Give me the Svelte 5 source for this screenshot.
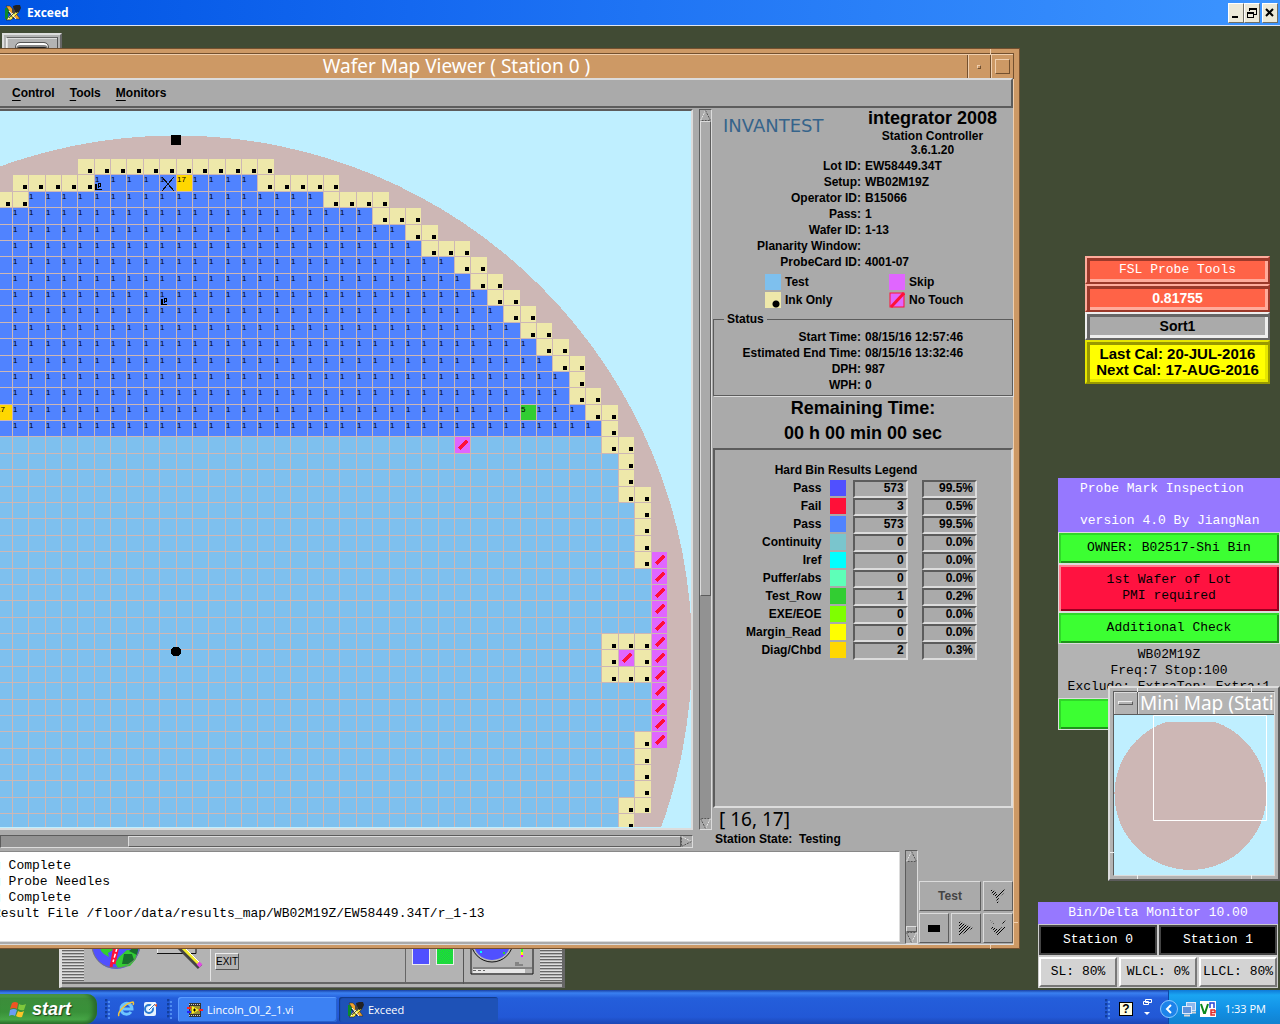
<script>
  const PITCH = 16.38;
  const colX = (c) => Math.ceil(12.3 + PITCH * c) - 1;
  const rowY = (r) => Math.round(158 + PITCH * r) - 111;

  // Ink-only dies per row, as [row, first column, last column]
  const ink = [
    [0, 4, 15], [1, 0, 4], [1, 15, 19], [2, -1, 0], [2, 19, 22], [3, 22, 24], [4, 24, 25],
    [5, 25, 27], [6, 27, 28], [7, 28, 29], [8, 29, 30], [9, 30, 31], [10, 31, 32],
    [11, 32, 33], [12, 33, 34], [13, 34, 34], [14, 34, 35], [15, 35, 36], [16, 36, 36],
    [17, 36, 37], [18, 37, 37], [19, 37, 37], [20, 37, 38], [21, 38, 38], [22, 38, 38],
    [23, 38, 38], [24, 38, 38], [29, 36, 38], [30, 36, 36], [30, 38, 38], [31, 36, 38],
    [35, 38, 38], [36, 38, 38], [37, 38, 38], [38, 38, 38], [39, 37, 38], [40, 37, 37]
  ];
  // Last tested (or testable) column of each row
  const lastCol = [
    null, 14, 18, 21, 23, 24, 26, 27, 28, 29, 30, 31, 32, 33, 33, 34, 35, 35, 36, 36, 36,
    37, 37, 37, 37, 38, 38, 38, 38, 35, 35, 35, 38, 38, 38, 37, 37, 37, 37, 36, 36
  ];
  const firstCol = (r) => (r === 1 ? 5 : r === 2 ? 1 : -1);

  const box = (c, r) => ({
    x: colX(c) + 1,
    y: rowY(r) + 1,
    w: colX(c + 1) - colX(c) - 1,
    h: rowY(r + 1) - rowY(r) - 1
  });

  const cells = [];
  for (const [r, a, b] of ink) {
    for (let c = a; c <= b; c++) cells.push({ ...box(c, r), kind: 'ink' });
  }
  for (let r = 1; r <= 40; r++) {
    for (let c = firstCol(r); c <= lastCol[r]; c++) {
      let kind = r <= 16 ? 'pass' : 'test';
      let bin = r <= 16 && c >= 0 ? '1' : '';
      if (r === 1 && c === 10) [kind, bin] = ['diag', '17'];
      if (r === 15 && c === -1) [kind, bin] = ['diag', '17'];
      if (r === 15 && c === 31) [kind, bin] = ['row', '5'];
      if (r === 17 && c === 27) kind = 'skip';
      cells.push({ ...box(c, r), kind, bin });
    }
  }
  for (let r = 24; r <= 35; r++) cells.push({ ...box(39, r), kind: 'skip' });
  cells.push({ ...box(37, 30), kind: 'skip' });

  const info = [
    ['Lot ID:', 'EW58449.34T'], ['Setup:', 'WB02M19Z'], ['Operator ID:', 'B15066'],
    ['Pass:', '1'], ['Wafer ID:', '1-13'], ['Planarity Window:', ''], ['ProbeCard ID:', '4001-07']
  ];
  const times = [
    ['Start Time:', '08/15/16 12:57:46'], ['Estimated End Time:', '08/15/16 13:32:46'],
    ['DPH:', '987'], ['WPH:', '0']
  ];
  const bins = [
    ['Pass', 'b-pass', '573', '99.5%'], ['Fail', 'b-fail', '3', '0.5%'],
    ['Pass', 'b-blue', '573', '99.5%'], ['Continuity', 'b-cont', '0', '0.0%'],
    ['Iref', 'b-iref', '0', '0.0%'], ['Puffer/abs', 'b-puff', '0', '0.0%'],
    ['Test_Row', 'b-row', '1', '0.2%'], ['EXE/EOE', 'b-exe', '0', '0.0%'],
    ['Margin_Read', 'b-marg', '0', '0.0%'], ['Diag/Chbd', 'b-diag', '2', '0.3%']
  ];
  const log = 'g Complete\ng Probe Needles\ng Complete\nResult File /floor/data/results_map/WB02M19Z/EW58449.34T/r_1-13';
</script>

{#snippet arrow(dir)}
  <svg class="arrow {dir}" width="11" height="11" viewBox="0 0 11 11" aria-hidden="true">
    <path d="M5.5 .5L.5 10.5" stroke="#e8e8e8" stroke-dasharray="2 1" />
    <path d="M5.5 .5L10.5 10.5H.5" stroke="#555" stroke-dasharray="2 1" fill="none" />
  </svg>
{/snippet}

{#snippet exceedIcon()}
  <svg width="16" height="16" viewBox="0 0 16 16" aria-hidden="true">
    <path d="M0 3h2l3 4-2 2v5H0z" fill="#0c8a2c" />
    <path d="M1 1h4l5 6 5 7h-4L6 9z" fill="#f2a32b" stroke="#222" stroke-width=".5" />
    <path d="M14 7L6 15H1l7-8 3-3z" fill="#f5ec48" stroke="#222" stroke-width=".6" />
    <path d="M4 6l7 8M10 6l-7 8" stroke="#fff" />
    <path d="M3 7l6 7M10 7l-6 6" stroke="#111" stroke-width=".7" />
    <path d="M8 1l3-1h4l1 3-2 4-3 1-2-2z" fill="#222" />
    <path d="M7 3l3 2v4L7 7z" fill="#444" />
  </svg>
{/snippet}

<div class="screen">
  <header class="xp-title">
    {@render exceedIcon()}
    <h1>Exceed</h1>
    <div class="xp-ctl">
      <button aria-label="Minimize"><svg width="12" height="12" viewBox="0 0 12 12"><path d="M2 10h6" stroke="#000" stroke-width="2" /></svg></button>
      <button aria-label="Restore"><svg width="12" height="12" viewBox="0 0 12 12" shape-rendering="crispEdges"><path d="M4 1h7v2H4zM3 1h1v3H3zM10 3h1v5H8V7h2zM1 5h7v2H1zM1 7h1v4H1zM7 7h1v4H7zM1 10h7v1H1z" /></svg></button>
      <button aria-label="Close" class="gap"><svg width="12" height="12" viewBox="0 0 12 12"><path d="M2 2l7 7M9 2l-7 7" stroke="#000" stroke-width="2" /></svg></button>
    </div>
  </header>

  <main class="desktop">
    <div class="cde-icon"><div><span></span></div></div>

    <div class="dock">
      <div class="grip"></div>
      <svg class="dock-art" width="150" height="38" viewBox="84 949 150 38" aria-hidden="true">
        <circle cx="116" cy="948" r="24" fill="#5050ff" />
        <path d="M100 949h9l4 4-5 3 1 4-5-3-3-3zM119 960l8-7 10 1-1 8-6 7-12 2-3-5z" fill="#32cd32" />
        <path d="M124 957h8l2 6-6 4h-6zM135 949h4l-2 9-8-4z" fill="#17702c" />
        <path d="M115 949l-4 21M118 949l-4 18" stroke="#ff1038" stroke-width="3" />
        <path d="M117 951l-4 14" stroke="#fff" stroke-width="1.5" stroke-dasharray="4 2" />
        <path d="M92 951c2 11 10 20 24 20 12 0 21-8 24-20" fill="none" stroke="#777" />
        <path d="M157.500 948v8h38v-8z" fill="#bbb" />
        <path d="M157.500 948v8" stroke="#eee" /><path d="M157 956.500h39V948" stroke="#111" fill="none" />
        <path d="M178 948l22 22" stroke="#444" stroke-width="6" />
        <path d="M179 947l20 20" stroke="#f5ee30" stroke-width="3" />
        <path d="M181 947l18 18" stroke="#fff" />
        <path d="M198 966l3 3" stroke="#e04de0" stroke-width="4" />
        <path d="M210.500 949v35" stroke="#e4e4e4" />
      </svg>
      <button class="exit">EXIT</button>
      <div class="dock-space"></div>
      <div class="swatches"><span></span><span class="g"></span></div>
      <svg class="dock-map" width="76" height="38" viewBox="463 949 76 38" aria-hidden="true">
        <path d="M462.500 949v35" stroke="#eee" />
        <path d="M469 948h63v28h-63z" fill="#b3b3b3" /><path d="M470 949v28h62v-28" stroke="#111" fill="none" />
        <circle cx="491" cy="944" r="21" fill="#b8b8b8" stroke="#111" />
        <circle cx="491" cy="944" r="19" fill="#5050ff" />
        <path d="M479 954h2v2h-2z" fill="#0ff" /><path d="M502 955h2v2h-2z" fill="#32cd32" />
        <path d="M521 949v3" stroke="#0ff" stroke-width="2" /><path d="M521 952v3" stroke="#3f3" stroke-width="2" /><path d="M521 955v3" stroke="#ff0" stroke-width="2" /><path d="M521 958v2" stroke="#f0f" stroke-width="2" />
        <path d="M514 966h4m-4 2h8M472 971h59" stroke="#555" />
        <path d="M472 972h52v4h-52z" fill="#e8e8e8" /><path d="M472 973.500h12" stroke="#666" stroke-dasharray="3 2" />
      </svg>
      <div class="grip"></div>
    </div>

    <section class="viewer">
      <div class="v-title">
        <h2>Wafer Map Viewer ( Station 0 )</h2>
        <button class="v-btn" aria-label="Minimize"><span class="dot"></span></button>
        <button class="v-btn" aria-label="Maximize"><span class="max"></span></button>
      </div>
      <nav class="menu">
        <button><u>C</u>ontrol</button>
        <button><u>T</u>ools</button>
        <button><u>M</u>onitors</button>
      </nav>
      <div class="work">
        <div class="map-col">
          <div class="map-row">
            <div class="map">
              <svg width="693" height="716" shape-rendering="crispEdges" role="img" aria-label="Wafer map">
                <circle cx="176" cy="540.500" r="516" fill="#cdb7b5" />
                {#each cells as cell}
                  <rect x={cell.x} y={cell.y} width={cell.w} height={cell.h} class={cell.kind} />
                  {#if cell.kind === 'ink'}
                    <rect x={cell.x + 10} y={cell.y + 10} width="4" height="4" />
                  {:else if cell.kind === 'skip'}
                    <path d="M{cell.x + 4} {cell.y + 12}l8 -8" stroke="#ff1038" stroke-width="3" />
                  {/if}
                  {#if cell.bin}
                    <text x={cell.x} y={cell.y + 7} class="bin">{cell.bin}</text>
                  {/if}
                {/each}
                <path d="M162 66l12 14M174 66l-12 14" stroke="#111" />
                <g fill="none" stroke="#000">
                  <path d="M96 73v6" stroke-width="2" /><path d="M95 78.500h7M98.500 77v-5M98 72.500h3M100.500 72v3M98 75.500h3" />
                  <path d="M162 188v6" stroke-width="2" /><path d="M161 193.500h6M164.500 192v-5M164 187.500h3M166.500 187v3M164 190.500h3" />
                </g>
                <rect x="171" y="24" width="10" height="10" />
                <circle cx="176" cy="540.500" r="5" />
              </svg>
            </div>
            <div class="sb v">
              <button aria-label="Scroll map up">{@render arrow('up')}</button>
              <div class="thumb"></div>
              <div class="trough"></div>
              <button aria-label="Scroll map down">{@render arrow('down')}</button>
            </div>
          </div>
          <div class="sb h">
            <div class="trough"></div>
            <div class="thumb"></div>
            <button aria-label="Scroll map right">{@render arrow('right')}</button>
          </div>
        </div>

        <aside class="panel">
          <div class="brand">
            <div class="logo">INVANTEST</div>
            <div class="prod"><h3>integrator 2008</h3><p>Station Controller</p><p>3.6.1.20</p></div>
          </div>
          <dl class="info">
            {#each info as [k, v]}<dt>{k}</dt><dd>{v}</dd>{/each}
          </dl>
          <div class="legend">
            <i class="l-test"></i><span>Test</span><i class="l-skip"></i><span>Skip</span>
            <i class="l-ink"></i><span>Ink Only</span>
            <svg width="16" height="16" viewBox="0 0 16 16"><rect x="1" y="1" width="14" height="14" fill="#e066ff" stroke="#ff1038" /><path d="M2 15L15 1" stroke="#ff1038" stroke-width="3" /></svg><span>No Touch</span>
          </div>
          <fieldset class="status">
            <legend>Status</legend>
            <dl class="info">
              {#each times as [k, v]}<dt>{k}</dt><dd>{v}</dd>{/each}
            </dl>
          </fieldset>
          <div class="remain"><p>Remaining Time:</p><p>00 h 00 min 00 sec</p></div>
          <div class="results">
            <table>
              <caption>Hard Bin Results Legend</caption>
              <tbody>
                {#each bins as [name, cls, count, pct]}
                  <tr>
                    <th scope="row">{name}</th>
                    <td class="sw"><i class={cls}></i></td>
                    <td class="num"><span>{count}</span></td>
                    <td class="num pct"><span>{pct}</span></td>
                  </tr>
                {/each}
              </tbody>
            </table>
          </div>
          <p class="coord">[ 16, 17]</p>
          <p class="state">Station State:&nbsp; Testing</p>
        </aside>
      </div>

      <div class="bottom">
        <div class="log"><textarea readonly aria-label="Station log" value={log}></textarea></div>
        <div class="sb v">
          <button aria-label="Scroll log up">{@render arrow('up')}</button>
          <div class="trough"></div>
          <div class="thumb small"></div>
          <button aria-label="Scroll log down">{@render arrow('down')}</button>
        </div>
        <div class="pad">
          <button class="wide" disabled>Test</button>
          <button aria-label="Step down" disabled><svg width="18" height="18" viewBox="0 0 18 18"><path d="M1 2l5 2 2 3h2l2-3 5-2-3 5-4 3-1 6H8l-1-6-4-3z" fill="url(#hatch)" /></svg></button>
          <button aria-label="Stop"><svg width="18" height="18" viewBox="0 0 18 18"><path d="M3 6h12v7H3z" /></svg></button>
          <button aria-label="Play" disabled><svg width="18" height="18" viewBox="0 0 18 18"><path d="M2 2l14 7-14 8z" fill="url(#hatch)" /></svg></button>
          <button aria-label="Skip down" disabled><svg width="18" height="18" viewBox="0 0 18 18"><path d="M1 1l4 3-1 1zM17 1l-4 3 1 1zM1 8h4l2 2h4l2-2h4l-8 9z" fill="url(#hatch)" /></svg></button>
          <svg width="0" height="0" class="defs" aria-hidden="true"><defs><pattern id="hatch" width="3" height="3" patternUnits="userSpaceOnUse"><path d="M0 3l3-3M-1 1l2-2M2 4l2-2" stroke="#000" /></pattern></defs></svg>
        </div>
      </div>
      <i class="tick top"></i><i class="tick side"></i><i class="tick foot"></i>
    </section>

    <section class="fsl">
      <button class="red mono">FSL Probe Tools</button>
      <button class="red">0.81755</button>
      <button class="gray">Sort1</button>
      <button class="yellow">Last Cal: 20-JUL-2016<br />Next Cal: 17-AUG-2016</button>
    </section>

    <section class="pmi mono">
      <h3>Probe Mark Inspection<br />version 4.0 By JiangNan</h3>
      <button>OWNER: B02517-Shi Bin</button>
      <button class="alert">1st Wafer of Lot<br />PMI required</button>
      <button>Additional Check</button>
      <p>WB02M19Z<br />Freq:7 Stop:100<br />Exclude: ExtraTop: Extra:1</p>
      <button aria-label="Confirm"></button>
    </section>

    <section class="mini">
      <div class="m-in">
        <div class="m-title"><button aria-label="Window menu"><span></span></button><h3>Mini Map (Stati</h3></div>
        <svg width="160" height="160" viewBox="0 0 160 160" aria-hidden="true">
          <path d="M52 7h49a76 76 0 1 1-49 0z" fill="#cdb7b5" shape-rendering="crispEdges" />
          <path d="M39.500 .5h113v105h-113z" fill="none" stroke="#fff" />
        </svg>
      </div>
      <i class="mt a"></i><i class="mt b"></i><i class="mt c"></i><i class="mt d"></i><i class="mt e"></i>
    </section>

    <section class="monitor mono">
      <h3>Bin/Delta Monitor 10.00</h3>
      <div class="m-row"><button class="st">Station 0</button><button class="st">Station 1</button></div>
      <div class="m-row"><button>SL: 80%</button><button>WLCL: 0%</button><button>LLCL: 80%</button></div>
    </section>
  </main>

  <footer class="taskbar">
    <button class="start">
      <svg width="18" height="18" viewBox="0 0 18 18" aria-hidden="true">
        <path d="M3 3q3-2 6 0L8 9Q5 7 1 9z" fill="#ef5423" /><path d="M10 4q3 2 7 0l-2 6q-3 1-6-1z" fill="#7fc83c" />
        <path d="M1 10q4-2 7 0l-2 6q-3-2-6 0z" fill="#6b9df5" /><path d="M9 11q3 2 6 0l-2 6q-3 1-6-1z" fill="#fcc529" />
      </svg>
      start
    </button>
    <i class="dots"></i>
    <button class="ql" aria-label="Internet Explorer"><svg width="18" height="18" viewBox="0 0 18 18"><path d="M14 12a5.500 5.500 0 1 1 1-3H5" fill="none" stroke="#6ec4ff" stroke-width="3" /><path d="M2 16C0 13 8 3 16 2q1 1 0 3" fill="none" stroke="#f5c53a" stroke-width="1.500" /></svg></button>
    <button class="ql" aria-label="Mail"><svg width="18" height="18" viewBox="0 0 18 18"><rect x="3" y="2" width="12" height="14" rx="2" fill="#e6f2ff" /><circle cx="8" cy="9" r="4" fill="none" stroke="#2a7bd0" stroke-width="2" /><path d="M8 9l7-6" stroke="#fff" stroke-width="3" /><path d="M8 10l6-6" stroke="#2a7bd0" /><path d="M13 5l3-1v3z" fill="#e2502c" /></svg></button>
    <i class="dots"></i>
    <button class="task">
      <svg width="16" height="16" viewBox="0 0 16 16" aria-hidden="true"><rect x="2" y="1" width="12" height="14" fill="#333" /><path d="M2 2.500h12M2 13.500h12" stroke="#ccc" stroke-dasharray="1 1" /><rect x="3" y="4" width="10" height="8" fill="#9a9333" /><path d="M5 4l7 4-7 4z" fill="#ffee22" /><path d="M0 6h4M12 8h4" stroke="#f22" stroke-width="2" /><path d="M0 10h4" stroke="#22f" stroke-width="2" /><path d="M6 8h3M7.500 6.500v3" stroke="#000" /></svg>
      Lincoln_OI_2_1.vi
    </button>
    <button class="task on">{@render exceedIcon()} Exceed</button>
    <span class="fill"></span>
    <i class="dots"></i>
    <span class="help">?</span>
    <svg class="lang" width="12" height="20" viewBox="0 0 12 20" aria-hidden="true"><path d="M4.500 2.500h6v3h-6zM2.500 4.500h5v3h-5z" fill="#2458d0" stroke="#fff" /><path d="M3 15h6l-3 3z" fill="#fff" /></svg>
    <div class="tray">
      <button class="chev" aria-label="Show hidden icons"><svg width="18" height="18" viewBox="0 0 18 18"><circle cx="9" cy="9" r="8.500" fill="#1d83ea" stroke="#8dc9ff" /><path d="M11 5L7 9l4 4" stroke="#fff" stroke-width="2" fill="none" /></svg></button>
      <svg width="16" height="16" viewBox="0 0 16 16" aria-hidden="true"><rect x="5.500" y="1.500" width="9" height="8" fill="#8db8ee" stroke="#dbe8f8" /><rect x="1.500" y="5.500" width="9" height="7" fill="#5f93dc" stroke="#e2ecfa" /><path d="M3 14.500h6M11 11.500h4" stroke="#d6d6d6" stroke-width="2" /></svg>
      <svg width="16" height="16" viewBox="0 0 16 16" aria-hidden="true"><rect width="16" height="16" fill="#fff" /><path d="M1 3l3 9h1l3-9" fill="none" stroke="#0a8a1c" stroke-width="2" /><path d="M10 7V2h4v5" fill="none" stroke="#2343d8" stroke-width="1.500" /><path d="M15 9h-4v5h4M11 11.500h4V9" fill="none" stroke="#e02a2a" stroke-width="1.500" /></svg>
      <time>1:33 PM</time>
    </div>
  </footer>
</div>

<style>
  :global(body) { margin: 0; }
  * { box-sizing: border-box; }
  h1, h2, h3, p, dl, dd { margin: 0; font-weight: inherit; font-size: inherit; }
  button { font: inherit; color: inherit; padding: 0; margin: 0; border: 0; background: none; }
  svg { display: block; flex: none; }
  .screen {
    display: flex; flex-direction: column; height: 100vh; min-height: 800px; overflow: hidden;
    font: bold 12px/16px "Liberation Sans", Arial, sans-serif; color: #000;
  }
  .mono { font: 13px/16px "Liberation Mono", "Courier New", monospace; }

  .xp-title {
    display: flex; align-items: center; gap: 6px; height: 26px; flex: none; padding: 0 2px 0 5px;
    background: linear-gradient(90deg, #0054e3, #1468f0 32%, #3d95ff); border-bottom: 1px solid #dfe6f2;
    color: #fff; font: bold 12px/24px "Open Sans", "Noto Sans", sans-serif;
  }
  .xp-ctl { display: flex; margin-left: auto; }
  .xp-ctl button {
    width: 16px; height: 20px; background: #ece9d8; display: grid; place-items: center;
    border: 1px solid; border-color: #fff #716f64 #716f64 #fff;
  }
  .xp-ctl .gap { margin-left: 2px; }

  .desktop { position: relative; flex: 1; overflow: hidden; background: #414b34; }

  .cde-icon { position: absolute; left: 2px; top: 7px; width: 60px; height: 60px; background: #b3b3b3; border: 2px solid; border-color: #ddd #666 #666 #ddd; padding: 2px; }
  .cde-icon div { height: 50px; border: 1px solid #555; border-left-color: #eee; border-top-color: #666; display: flex; justify-content: center; padding-top: 4px; box-shadow: inset 1px 1px #ddd; }
  .cde-icon span { width: 34px; height: 20px; border: 1px solid #555; border-radius: 5px; box-shadow: inset 0 2px #fff, inset 0 4px #888, inset 0 6px #222; }

  .dock {
    position: absolute; left: 59px; bottom: 2px; width: 506px; height: 60px; display: flex; align-items: flex-end;
    background: #b3b3b3; border: 3px solid; border-color: #ddd #666 #666 #ddd; border-bottom-width: 1px; padding-bottom: 3px;
    box-shadow: inset 0 -3px #b3b3b3, inset 0 -5px #666;
  }
  .grip { width: 22px; height: 36px; flex: none; margin-bottom: 2px; background: repeating-linear-gradient(#ddd 0 1px, #666 1px 2px, #b3b3b3 2px 3px); }
  .dock-art { margin-right: -19px; }
  .exit { width: 24px; height: 17px; margin-bottom: 14px; border: 1px solid; border-color: #eee #555 #555 #eee; font: 10px/15px "Liberation Sans", sans-serif; text-align: center; position: relative; }
  .dock-space { flex: 1; height: 36px; border-right: 1px solid #666; }
  .swatches { display: flex; gap: 6px; height: 36px; padding: 0 9px 0 6px; border-right: 1px solid #555; margin-bottom: 0; }
  .swatches span { width: 18px; height: 17px; background: #5050ff; border: 1px solid #eee; border-top: 0; }
  .swatches .g { background: repeating-conic-gradient(#2cb45a 0 25%, #0fff20 0 50%) 0 0 / 2px 2px; }

  /* ---- wafer map viewer ---- */
  .viewer {
    position: absolute; left: 0; right: 261px; top: 23px; bottom: 42px; display: flex; flex-direction: column;
    background: #aaa; border: solid #cd9965; border-width: 5px 5px 3px 0;
    outline: 1px solid #73502f; box-shadow: inset -1px 0 #f0cfae; padding-right: 1px;
  }
  .v-title { display: flex; height: 24px; flex: none; background: #cd9965; border-top: 1px solid #f0cfae; outline: 1px solid #73502f; color: #fff; }
  .v-title h2 { flex: 1; text-align: center; padding-right: 54px; font: 19px/22px "Noto Sans", sans-serif; white-space: nowrap; overflow: hidden; }
  .v-btn { width: 23px; border-left: 1px solid #73502f; box-shadow: inset 1px 0 #f0cfae; display: grid; place-items: center; flex: none; }
  .dot { width: 4px; height: 4px; border: 1px solid; border-color: #f0cfae #73502f #73502f #f0cfae; }
  .max { width: 15px; height: 15px; border: 1px solid; border-color: #f0cfae #73502f #73502f #f0cfae; }
  .menu { display: flex; gap: 15px; height: 30px; flex: none; padding-left: 12px; border: 2px solid; border-color: #dcdcdc #5c5c5c #5c5c5c; border-left: 0; }
  .menu u { text-underline-offset: 3px; }
  .work { flex: 1; display: flex; min-height: 0; }
  .map-col { flex: 1; min-width: 0; display: flex; flex-direction: column; padding-top: 1px; gap: 5px; }
  .map-row { flex: 1; min-height: 0; display: flex; gap: 6px; }
  .map { flex: 1; min-width: 0; overflow: hidden; background: #bfefff; border: 2px solid; border-color: #5c5c5c #dcdcdc #dcdcdc; border-left: 0; }
  .ink { fill: #eee8aa; } .pass { fill: #5083ff; } .test { fill: #7ec0ee; }
  .diag { fill: #ffd700; } .row { fill: #32cd32; } .skip { fill: #e066ff; }
  .bin { font: 8px "Liberation Sans", sans-serif; }

  .sb { flex: none; display: flex; background: #929292; border: 1px solid; border-color: #5c5c5c #dcdcdc #dcdcdc #5c5c5c; }
  .sb button { width: 11px; height: 11px; flex: none; background: #aaa; }
  .sb .thumb { background: #aaa; border: 1px solid; border-color: #dcdcdc #5c5c5c #5c5c5c #dcdcdc; }
  .sb .trough { flex: 1; }
  .sb.v { width: 13px; flex-direction: column; }
  .map-row .thumb { flex: 0 0 66%; }
  .sb.h { height: 13px; margin-right: 19px; margin-bottom: 2px; }
  .sb.h .thumb { flex: 0 0 80%; }
  .thumb.small { height: 6px; }
  .arrow.down { transform: rotate(180deg); }
  .arrow.right { transform: rotate(90deg); }

  .panel { width: 301px; flex: none; display: flex; flex-direction: column; padding-left: 1px; }
  .brand { display: flex; justify-content: space-between; padding: 0 16px 0 10px; height: 50px; }
  .logo { font: 18px/20px "DejaVu Sans", sans-serif; color: #36648b; padding-top: 8px; }
  .prod { text-align: center; line-height: 14px; }
  .prod h3 { font-size: 18px; line-height: 21px; }
  .info { display: grid; grid-template-columns: 148px 1fr; column-gap: 4px; grid-auto-rows: 16px; }
  .info dt { text-align: right; }
  .legend { display: grid; grid-template-columns: 16px 100px 16px 1fr; gap: 2px 4px; padding: 4px 0 0 52px; }
  .legend i { width: 16px; height: 16px; }
  .l-test { background: #7ec0ee; } .l-skip { background: #e066ff; }
  .l-ink { background: radial-gradient(circle at 11px 12px, #000 3px, transparent 4px) #eee8aa; }
  .status { margin: 3px 0 0; padding: 2px 0 1px; border: 1px solid #5c5c5c; box-shadow: 1px 1px #dcdcdc; min-width: 0; height: 85px; }
  .status legend { margin-left: 10px; padding: 0 3px; }
  .status .info { grid-template-columns: 147px 1fr; }
  .remain { text-align: center; font-size: 18px; line-height: 25px; height: 52px; }
  .results { flex: 1; border: 2px solid; border-color: #5c5c5c #dcdcdc #dcdcdc #5c5c5c; padding-top: 12px; }
  table { border-collapse: collapse; table-layout: fixed; width: 262px; }
  caption { text-align: center; height: 18px; }
  tr { height: 18px; }
  th, td { padding: 0; font-weight: bold; vertical-align: top; height: 18px; }
  th { width: 106px; text-align: right; }
  .sw { width: 31px; padding-left: 9px; }
  .sw i { display: block; width: 16px; height: 16px; }
  .num { width: 55px; }
  .num span { display: block; height: 18px; line-height: 12px; text-align: right; padding-right: 2px; border: 2px solid; border-color: #5c5c5c #dcdcdc #dcdcdc #5c5c5c; }
  .pct { width: 69px; padding-left: 14px; }
  .b-pass { background: #5050ff; } .b-fail { background: #ff1038; } .b-blue { background: #5083ff; }
  .b-cont { background: #7ac5cd; } .b-iref { background: #0ff; } .b-puff { background: #5effb8; }
  .b-row { background: #32cd32; } .b-exe { background: #7fff00; } .b-marg { background: #ff0; } .b-diag { background: #ffd700; }
  .coord { font: 19px/23px "Noto Sans", sans-serif; padding-left: 6px; }
  .state { line-height: 16px; padding: 0 0 3px 2px; }

  .bottom { display: flex; height: 95px; flex: none; border-bottom: 1px solid #dcdcdc; }
  .log { flex: 1; min-width: 0; overflow: hidden; display: flex; margin: 1px 5px 2px 0; background: #fff; border: 1px solid; border-color: #888 #dcdcdc #dcdcdc; border-left: 0; }
  .log textarea { flex: 1; margin: 0 0 0 -7px; padding: 6px 0 0; border: 0; outline: 0; resize: none; overflow: hidden; background: #fff; color: #000; font: 13px/16px "Liberation Mono", monospace; white-space: pre; }
  .pad { display: grid; grid-template-columns: repeat(3, 30px); grid-auto-rows: 30px; gap: 2px; align-content: end; padding: 0 0 1px 1px; position: relative; }
  .pad button { border: 1px solid; border-color: #dcdcdc #5c5c5c #5c5c5c #dcdcdc; display: grid; place-items: center; }
  .pad .wide { grid-column: span 2; color: #444; }
  .defs { position: absolute; }
  .tick { position: absolute; background: #f0cfae; }
  .tick.top { width: 1px; height: 5px; right: 23px; top: -5px; }
  .tick.side { width: 4px; height: 1px; right: -4px; bottom: 22px; }
  .tick.foot { width: 1px; height: 4px; right: 23px; bottom: -4px; }

  /* ---- right-hand tool windows ---- */
  .fsl { position: absolute; right: 10px; top: 230px; width: 185px; display: flex; flex-direction: column; font-size: 14px; }
  .fsl button { padding: 4px 0; border: 2px solid; }
  .fsl .red { background: #ff6347; color: #fff; border-color: #ffab9b #9b392a #9b392a #ffab9b; box-shadow: inset 3px 3px #9b392a, inset -3px -3px #ffab9b; }
  .fsl .gray { background: #aaa; border-color: #eee #666 #666 #eee; box-shadow: inset 3px 3px #666, inset -3px -3px #eee; }
  .fsl .yellow { font-size: 15px; background: #ff0; border-color: #e6e600 #999900 #999900 #e6e600; box-shadow: inset 3px 3px #999900, inset -3px -3px #e6e600; }
  .pmi { position: absolute; right: 0; top: 452px; width: 222px; display: flex; flex-direction: column; background: #b3b3b3; }
  .pmi h3 { display: flex; align-items: center; height: 54px; padding-left: 22px; background: #9678ff; color: #fff; line-height: 32px; white-space: nowrap; }
  .pmi button { min-height: 32px; border: 1px solid #dcdcdc; background: #3cff32; box-shadow: inset 2px 2px #2fd828, inset -2px -2px #1e941a; padding: 0; }
  .pmi .alert { background: #ff1240; height: 48px; box-shadow: inset 2px 2px #ff8090, inset -2px -2px #990020; }
  .pmi p { text-align: center; padding: 3px 0; height: 54px; white-space: nowrap; overflow: hidden; }
  .mini { position: absolute; right: 0; top: 660px; padding: 3px; background: #b3b3b3; border: 2px solid; border-color: #dcdcdc #5c5c5c #5c5c5c #dcdcdc; }
  .m-in { width: 162px; border: 1px solid; border-color: #5c5c5c #dcdcdc #dcdcdc #5c5c5c; background: #bfefff; }
  .m-title { display: flex; height: 23px; background: #b3b3b3; border-bottom: 1px solid #5c5c5c; color: #fff; overflow: hidden; }
  .m-title button { width: 24px; flex: none; display: grid; place-items: center; border-right: 1px solid #5c5c5c; box-shadow: inset 1px 1px #dcdcdc; }
  .m-title span { width: 15px; height: 4px; border: 1px solid; border-color: #eee #5c5c5c #5c5c5c #eee; }
  .m-title h3 { flex: 1; min-width: 0; overflow: hidden; white-space: nowrap; padding-left: 2px; font: 19px/22px "Noto Sans", sans-serif; box-shadow: inset 1px 1px #dcdcdc; }
  .mt { position: absolute; background: #eee; }
  .mt.a, .mt.b { top: 0; width: 1px; height: 4px; }
  .mt.c, .mt.d { bottom: 0; width: 1px; height: 4px; }
  .mt.a, .mt.c { left: 27px; }
  .mt.b, .mt.d { right: 26px; }
  .mt.e { left: 0; bottom: 26px; width: 4px; height: 1px; }
  .monitor { position: absolute; right: 2px; bottom: 2px; width: 240px; background: #cdcdcd; }
  .monitor h3 { background: #9678ff; color: #fff; text-align: center; line-height: 22px; }
  .m-row { display: flex; gap: 2px; padding: 1px; }
  .m-row button { flex: 1 1 0; height: 30px; background: #d3d3d3; border: 2px solid; border-color: #fff #777 #777 #fff; white-space: nowrap; }
  .m-row .st { background: #000; color: #fff; border-color: #444; }

  /* ---- taskbar ---- */
  .taskbar {
    display: flex; align-items: center; height: 34px; flex: none; color: #fff;
    font: 11px/24px "Open Sans", "Noto Sans", sans-serif;
    background: linear-gradient(#1941a5, #3a80f0 3px, #245edb 8px, #2258d6 80%, #1b47b5);
  }
  .start {
    display: flex; align-items: center; gap: 5px; width: 97px; height: 30px; margin: 4px 8px 0 0; padding: 0 0 0 9px;
    border-radius: 0 10px 12px 0; background: linear-gradient(#5eac56, #3c8d3a 15%, #399139 60%, #46a546 85%, #2c722c);
    box-shadow: inset -4px 0 4px #2a6a2a; font: italic bold 18px/28px "Liberation Sans", sans-serif; text-shadow: 1px 1px 1px #1c401c;
  }
  .dots { width: 6px; height: 20px; margin-top: 4px; background: radial-gradient(circle at 1px 1px, #123f9e 1px, transparent 2px) 0 0 / 6px 4px, radial-gradient(circle at 4px 3px, #4f8df0 1px, transparent 1px) 0 0 / 6px 4px; }
  .ql { margin: 4px 0 0 6px; }
  .ql + .dots { margin-left: 8px; }
  .task { display: flex; align-items: center; gap: 4px; width: 159px; height: 25px; margin: 5px 0 0 2px; padding-left: 9px; border-radius: 3px; background: #3c81f3; box-shadow: inset 1px 1px #5a9bff, inset -1px -1px #2a62cc; text-align: left; }
  .dots + .task { margin-left: 5px; }
  .task.on { background: #1e52b7; box-shadow: inset 1px 1px 1px #123a86; }
  .fill { flex: 1; }
  .help { width: 14px; height: 14px; margin: 4px 0 0 8px; background: #fffde0; border: 1px solid #000; color: #000; font: bold 12px/12px "Liberation Sans", sans-serif; text-align: center; }
  .lang { margin: 0 8px 0 8px; }
  .tray { display: flex; align-items: center; gap: 3px; height: 34px; padding: 4px 14px 0 0; margin-left: 7px; background: linear-gradient(#0f7ad8, #1aa5f2 5px, #1290e4 60%, #1182d0); box-shadow: inset 1px 0 #0b4aa8; }
  .chev { margin-left: -8px; }
  .tray time { margin-left: 6px; }
</style>
